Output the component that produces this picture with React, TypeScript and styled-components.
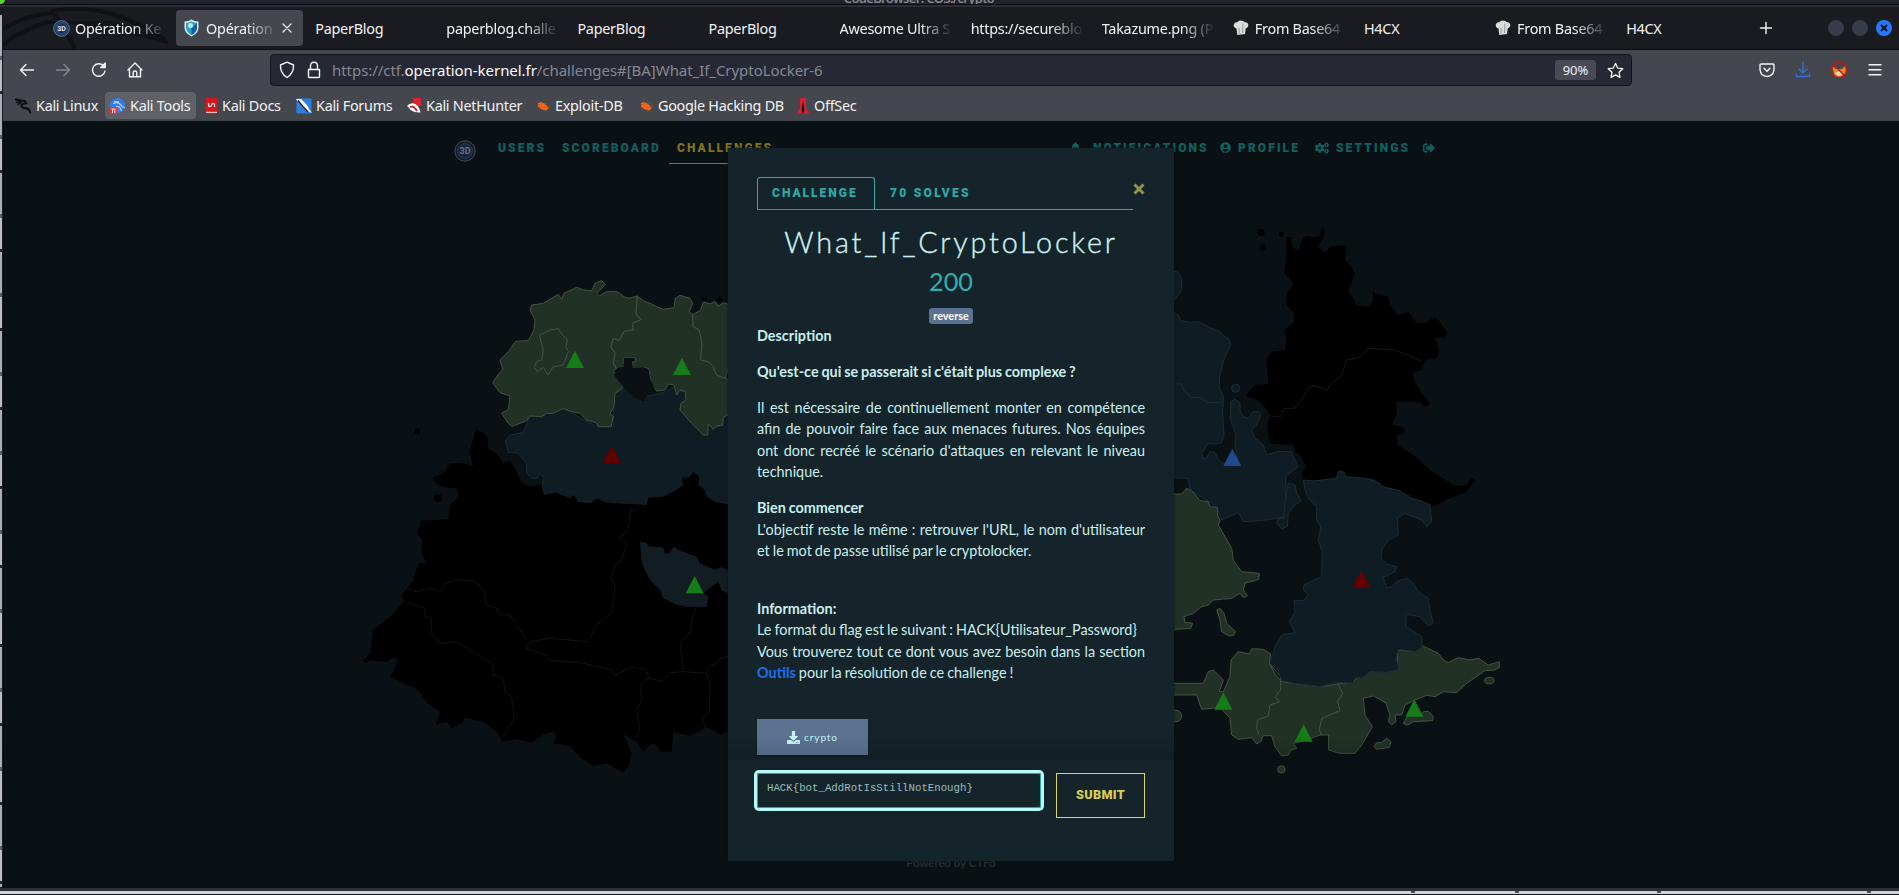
import React from 'react';
import styled, { createGlobalStyle, css } from 'styled-components';
import { FaBell, FaUserCircle, FaCogs, FaSignOutAlt, FaDownload } from 'react-icons/fa';

const GlobalStyle = createGlobalStyle`
  * { box-sizing: border-box; }
  html, body { margin: 0; padding: 0; overflow: hidden; background: #0a1114; }
`;

const Desktop = styled.div`
  position: relative;
  width: 1899px;
  height: 895px;
  display: flex;
  flex-direction: column;
  overflow: hidden;
  background: #1a1b20;
  font-family: 'Noto Sans', sans-serif;
`;
const BackWindow = styled.div`
  height: 7px;
  flex: none;
  overflow: hidden;
  display: flex;
  justify-content: center;
  padding-right: 61px;
  background: linear-gradient(#20212a 0 4px, #0c0d12 4px 5px, #2c2d36 5px 7px);
  color: #85868c;
  font-size: 13px;
  line-height: 18px;
  font-weight: 600;
  white-space: nowrap;
`;
const BackTitle = styled.div`
  height: 4px;
  overflow: hidden;
  span { display: block; margin-top: -11px; letter-spacing: -0.65px; }
`;
const LeftEdge = styled.div`
  position: absolute;
  left: 0;
  top: 15px;
  width: 2px;
  height: 872px;
  background: repeating-linear-gradient(#a9b0b8 0 41px, #59616c 41px 45px, #b9bfc4 45px 76px, #20252e 76px 79px);
`;
const GreenDot = styled.div`
  position: absolute;
  left: -4px;
  top: -5px;
  width: 9px;
  height: 9px;
  border-radius: 50%;
  background: #59d631;
`;
const Browser = styled.div`
  margin-left: 2px;
  display: flex;
  flex-direction: column;
  height: 881px;
  flex: none;
  border-left: 1px solid #15171c;
`;
const TabBar = styled.div`
  position: relative;
  height: 43px;
  flex: none;
  display: flex;
  align-items: center;
  padding-left: 40px;
  background: #1a1b20;
  border-bottom: 1px solid #0e0f14;
`;
const Dragon = styled.svg`
  position: absolute;
  left: 0;
  top: 0;
`;
const Tab = styled.div<{ $active?: boolean }>`
  position: relative;
  width: 127.1px;
  margin: 0 2px;
  height: 36px;
  padding: 0 ${p => (p.$active ? 6 : 8)}px 0 8px;
  border-radius: 4px;
  display: flex;
  align-items: center;
  color: #f3f3f5;
  ${p => p.$active && css`background: #44474d;`}
`;
const TabIcon = styled.span`
  width: 22px;
  flex: none;
  display: flex;
`;
const TabTitle = styled.span<{ $fade?: boolean }>`
  flex: 1;
  overflow: hidden;
  white-space: nowrap;
  font-size: 14.4px;
  letter-spacing: -0.25px;
  ${p => p.$fade && css`mask-image: linear-gradient(90deg, #000 calc(100% - 32px), transparent calc(100% + 2px));`}
`;
const NewTab = styled.div`
  width: 38px;
  display: flex;
  justify-content: center;
`;
const WindowButtons = styled.div`
  margin-left: auto;
  padding-right: 7px;
  display: flex;
  gap: 8px;
`;
const WindowButton = styled.span<{ $close?: boolean }>`
  width: 16px;
  height: 16px;
  border-radius: 50%;
  background: ${p => (p.$close ? '#2777ff' : '#383c4a')};
  display: flex;
  align-items: center;
  justify-content: center;
`;
const Toolbar = styled.div`
  height: 41px;
  flex: none;
  display: flex;
  align-items: center;
  background: #44474d;
  padding: 0 15px 1px 15px;
`;
const NavButtons = styled.div`
  width: 252px;
  display: flex;
  gap: 18px;
  svg { display: block; }
`;
const UrlBar = styled.div`
  width: 1362px;
  height: 32px;
  display: flex;
  align-items: center;
  padding: 0 7px 0 8px;
  border: 1px solid #14151c;
  border-radius: 4px;
  background: #262833;
`;
const UrlIcons = styled.div`
  width: 53px;
  display: flex;
  gap: 11px;
  align-items: center;
`;
const Url = styled.div`
  flex: 1;
  font-size: 15px;
  letter-spacing: -0.05px;
  color: #868891;
  white-space: nowrap;
  b { font-weight: 400; color: #fbfbfe; }
`;
const Zoom = styled.span`
  width: 41px;
  height: 20px;
  border-radius: 3px;
  background: #484a55;
  color: #f3f3f5;
  font-size: 13px;
  line-height: 21px;
  text-align: center;
  margin-right: 11px;
`;
const Tools = styled.div`
  flex: 1;
  display: flex;
  justify-content: flex-end;
  gap: 18px;
`;
const Bookmarks = styled.div`
  height: 30px;
  flex: none;
  display: flex;
  align-items: flex-start;
  padding: 1px 0 0 7px;
  background: #44474d;
`;
const Bookmark = styled.div<{ $w: number; $hover?: boolean }>`
  width: ${p => p.$w}px;
  height: 27px;
  margin-right: 4px;
  display: flex;
  align-items: center;
  gap: 4px;
  padding: 0 0 0 5px;
  border-radius: 4px;
  background: ${p => (p.$hover ? '#5f6166' : 'transparent')};
  color: #f3f3f5;
  font-size: 14.4px;
  letter-spacing: -0.28px;
  white-space: nowrap;
  svg { flex: none; }
`;
const Page = styled.main`
  position: relative;
  flex: 1;
  overflow: hidden;
  background: #0a1115;
  font-family: Lato, sans-serif;
`;
const MapSvg = styled.svg`
  position: absolute;
  left: -3px;
  top: 0;
`;
const Navbar = styled.nav`
  position: relative;
  height: 60px;
  display: flex;
  align-items: flex-start;
  padding: 19px 462px 0 451px;
`;
const NavLogo = styled.div`
  width: 44px;
  flex: none;
`;
const NavItem = styled.div<{ $w: number; $active?: boolean }>`
  width: ${p => p.$w}px;
  height: 24px;
  flex: none;
  display: flex;
  align-items: flex-start;
  gap: 5px;
  font: 900 12px/16px Roboto, sans-serif;
  letter-spacing: 2.1px;
  color: ${p => (p.$active ? '#7f741d' : '#0f615f')};
  white-space: nowrap;
  svg { flex: none; }
  ${p => p.$active && css`padding-left: 8px; margin-left: -8px; border-bottom: 1px solid #7b7a35;`}
`;
const NavRight = styled.div`
  margin-left: auto;
  display: flex;
`;
const NavIcon = styled.span<{ $top?: number; $right?: number }>`
  display: flex;
  margin-top: ${p => p.$top ?? 2}px;
  margin-right: ${p => p.$right ?? 2}px;
`;
const Footer = styled.footer`
  position: absolute;
  left: 0;
  right: 0;
  bottom: 17px;
  text-align: center;
  font-size: 11.5px;
  line-height: 16px;
  color: #303437;
`;
const Shade = styled.div`
  position: absolute;
  left: 0;
  right: 0;
  top: 615px;
  height: 24px;
  background: linear-gradient(transparent, rgba(0, 0, 0, 0.12));
  border-bottom: 1px solid rgba(0, 0, 0, 0.06);
`;
const Modal = styled.section`
  position: absolute;
  left: 725px;
  top: 27px;
  width: 446px;
  height: 713px;
  padding: 29px 29px 0;
  background: #14242a;
  box-shadow: 0 0 2px #081014;
  color: #c9eeee;
`;
const ModalTabs = styled.div`
  width: 376px;
  height: 33px;
  display: flex;
  border-bottom: 1px solid #2fa9ab;
`;
const ModalTab = styled.div<{ $active?: boolean }>`
  height: 33px;
  padding: 0 0 0 14px;
  border: 1px solid ${p => (p.$active ? '#2fa9ab' : 'transparent')};
  border-bottom-color: ${p => (p.$active ? '#2a9b9d' : 'transparent')};
  border-radius: 3px 3px 0 0;
  font: 900 12px/31px Roboto, sans-serif;
  letter-spacing: ${p => (p.$active ? 2 : 2.3)}px;
  color: #28aaac;
  white-space: nowrap;
  width: ${p => (p.$active ? 118 : 120)}px;
`;
const Close = styled.span`
  position: absolute;
  right: 29px;
  top: 35px;
  line-height: 0;
`;
const Title = styled.h2`
  margin: 15px -20px 0;
  text-align: center;
  font: 300 28.8px/34px Lato, sans-serif;
  letter-spacing: 2.8px;
  -webkit-text-stroke: 0.35px #ccf3f3;
  color: #ccf3f3;
`;
const Points = styled.h3`
  margin: 7px 0 0;
  text-align: center;
  font: 400 25.2px/30px Lato, sans-serif;
  color: #2fafb0;
`;
const TagRow = styled.div`
  margin-top: 12px;
  display: flex;
  justify-content: center;
`;
const Tag = styled.span`
  height: 16px;
  padding: 0 4px;
  border-radius: 3px;
  background: #5b7290;
  color: #fff;
  font: 700 10.8px/15px Lato, sans-serif;
`;
const Description = styled.div`
  margin-top: 1px;
  height: 394px;
  font-size: 14.4px;
  line-height: 21.5px;
  word-spacing: -0.65px;
  text-align: justify;
  p { margin: 0 0 14.4px; }
  a { color: #1a6ff0; font-weight: 700; }
`;
const FileButton = styled.div`
  width: 111px;
  height: 36px;
  display: flex;
  align-items: center;
  justify-content: center;
  gap: 4px;
  background: #5b7290;
  color: #c3f4f4;
  font-size: 10.1px;
  letter-spacing: 0.9px;
  box-shadow: 0 1px 2px rgba(0, 0, 0, 0.35);
`;
const SubmitRow = styled.div`
  margin-top: 18px;
  display: flex;
  justify-content: space-between;
  align-items: flex-start;
`;
const Answer = styled.div`
  width: 284px;
  height: 35px;
  padding: 0 9px;
  border: 1px solid #2fa6a6;
  border-radius: 2px;
  box-shadow: 0 0 0 3px #b5fbfa;
  font: 10.72px/29px 'Liberation Mono', monospace;
  color: #98bfc0;
`;
const Submit = styled.div`
  width: 89px;
  height: 45px;
  border: 1px solid #dcd35d;
  color: #d9cf4e;
  text-align: center;
  font: 900 12.6px/42px Roboto, sans-serif;
  letter-spacing: 0.3px;
`;
const BottomEdge = styled.div`
  position: relative;
  height: 7px;
  flex: none;
  background: linear-gradient(#2c2d35 0 3px, #d3d4d9 3px 6px, #14151d 6px);
`;
const EdgeMark = styled.span<{ $x: number }>`
  position: absolute;
  left: ${p => p.$x}px;
  top: 3px;
  width: 4px;
  height: 2px;
  background: #4a4f5a;
`;

const Badge3D = ({ size, dim }: { size: number; dim?: boolean }) => (
  <svg width={size} height={size} viewBox="0 0 22 22">
    <circle cx="11" cy="11" r="10.2" fill={dim ? '#141d2c' : '#1d3a68'} stroke={dim ? '#474e53' : '#6f8f8c'} />
    <circle cx="11" cy="11" r="7.3" fill={dim ? '#16244a' : '#173667'} stroke={dim ? '#39414c' : '#3d6186'} strokeWidth="0.8" />
    <text x="11" y="14.2" textAnchor="middle" fontFamily="Roboto" fontSize="9" fontWeight="700" fill={dim ? '#6c7274' : '#dfe9f1'}>3D</text>
  </svg>
);
const ShieldFavicon = () => (
  <svg width="15" height="18" viewBox="0 0 15 18">
    <path d="M7.500.5Q10.500 2.500 14.500 2.500V9Q14 14.500 7.500 17.500Q1 14.500.5 9V2.500Q4.500 2.500 7.500.5Z" fill="#d9eef7" />
    <path d="M7.500 2.200Q10 3.800 13 3.900V9Q12.500 13.500 7.500 16Q2.500 13.500 2 9V3.900Q5 3.800 7.500 2.200Z" fill="#2f9fce" />
    <path d="M7.500 9L13 4V9Q12.500 13.500 7.500 16Z" fill="#0d5fae" />
    <circle cx="6.500" cy="6.500" r="2.500" fill="#bfeaf5" />
  </svg>
);
const ChefHat = () => (
  <svg width="16" height="16" viewBox="0 0 16 16">
    <path d="M3.500 8.500Q.3 7.500.8 4.500Q1.500 2 4.300 2.200Q6 0 8.500.8Q10.500.2 12 2.300Q15 2.200 15.300 4.800Q15.500 7.500 12.700 8.500L12 14L4.300 15Z" fill="#dcdcdc" />
    <path d="M6 8L6.300 13.500M10 3.500L9.500 13" stroke="#9a9a9a" fill="none" />
  </svg>
);
const line = { fill: 'none', stroke: '#f4f4f6', strokeWidth: 1.4, strokeLinecap: 'round' as const, strokeLinejoin: 'round' as const };

const BookmarkGlyph = ({ kind }: { kind: string }) => {
  switch (kind) {
    case 'kali':
      return (
        <svg width="17" height="16" viewBox="0 0 17 16" fill="none" stroke="#0c0d10" strokeLinecap="round">
          <path d="M.8 1.500L6 2.500L9.500 3L11 5.200L7 6.300Q5.500 8.500 8 9.700L12.500 10.500Q14.500 11.500 15.300 14.500" strokeWidth="2" />
          <path d="M1.500 4.500L6 3M3 6.500L6.500 4" strokeWidth="1.400" />
        </svg>
      );
    case 'tools':
      return (
        <svg width="16" height="16" viewBox="0 0 16 16">
          <circle cx="7.500" cy="7.500" r="7.500" fill="#2f7df0" />
          <path d="M3 5.500Q8 3.500 10.500 6.500Q12 9 15 10M6 8.500Q10 7.500 11.500 13M4 3.500L9 3.800" stroke="#b9d5fa" strokeWidth="1.200" fill="none" />
          <rect y="9" width="7" height="7" fill="#e3333b" />
          <path d="M2.500 11V15M4.800 11V15M1.500 11H5.500" stroke="#fff" strokeWidth=".8" />
        </svg>
      );
    case 'docs':
      return (
        <svg width="13" height="16" viewBox="0 0 13 16">
          <rect x=".5" width="12" height="16" rx="1" fill="#d8141c" />
          <path d="M1 14.300H12" stroke="#f6dada" />
          <path d="M3.500 5V7.500Q3.500 8.500 5 8.500Q6.500 8.500 6.500 7Q6.500 5.500 8 5.500Q9.500 5.500 9.500 6.500V9" stroke="#fff" strokeWidth="1.200" fill="none" />
        </svg>
      );
    case 'forums':
      return (
        <svg width="16" height="16" viewBox="0 0 16 16">
          <rect x=".5" y=".5" width="15" height="15" rx="1" fill="#2b7fe0" />
          <path d="M0 1L5 1L11 7L13 11L16 15L10 12.500L6 8Z" fill="#fff" />
          <path d="M2 2.500L7 8.500L12 14" stroke="#12161d" strokeWidth="1.300" fill="none" />
        </svg>
      );
    case 'nethunter':
      return (
        <svg width="16" height="16" viewBox="0 0 16 16">
          <path d="M6 0H15Q14 3 15.500 7L10 10Z" fill="#dd2230" />
          <path d="M1 8Q5 3.500 10 6.500Q14 10 14.500 14.500Q9 15 4.500 12Q3 9.500 1 8Z" fill="#fff" />
          <path d="M4 9Q8 7.500 11 13" stroke="#c61b2a" strokeWidth="1.800" fill="none" />
        </svg>
      );
    case 'offsec':
      return (
        <svg width="14" height="16" viewBox="0 0 14 16">
          <path d="M4 0H10V10L13.500 15.500H.5L4 10Z" fill="#d5202f" />
          <path d="M7 3L8.500 12L7 15.500L5.500 12Z" fill="#2a0a0d" />
        </svg>
      );
    default:
      return (
        <svg width="16" height="16" viewBox="0 0 16 16">
          <path d="M3 5L6 4L10.500 6L14 10.500L11 12.500L6.500 11.500L3 8.500Z" fill="#e8671b" />
          <path d="M2 6L5 7M4 12L6 10M12 5L10 7M15 8L12 9M9 14V11" stroke="#b54c10" strokeWidth=".7" />
        </svg>
      );
  }
};

const GREEN = { fill: '#213125', stroke: '#44523f', strokeWidth: 3 };
const BLUE = { fill: '#101c23', stroke: '#1a2c37', strokeWidth: 3 };
const markerColor = { g: '#157c17', r: '#650000', b: '#214a8c' };

const Marker = ({ x, y, c }: { x: number; y: number; c: 'g' | 'r' | 'b' }) => (
  <path d={`M${x} ${y}L${x + 27} ${y + 52}H${x - 27}Z`} fill={markerColor[c]} />
);

const IslandMap = () => (
  <MapSvg width="1899" height="767" viewBox="0 121 1899 767" strokeLinejoin="round">
    <g transform="translate(350 130) scale(.33333)">
      <path {...BLUE} d="M540 858L520 908L480 915L466 932L475 967L505 970L518 985L530 1000L530 1030L545 1045L560 1045L570 1032L583 1045L575 1070L590 1100L900 1140H1134V850L1060 915L990 835L1007 790L975 770L945 785L915 795L890 797L875 815L822 778L790 790V890L740 890L640 835Z" />
      <path {...GREEN} d="M540 540L545 525L580 520L600 508L625 493L635 508L642 490L660 482L680 472L700 480L725 482L735 460L755 452L766 464L740 490L748 498L772 484L802 485L822 500L835 505L862 498L858 550L872 570L848 580L850 600L822 604L808 632L790 625L783 650L795 670L790 700L800 715L790 722L795 735L822 770L795 790L792 830L780 850L790 858L783 890L745 890L738 878L710 870L690 850L665 845L640 835L610 850L590 850L575 860L540 858L530 872L510 880L486 889L475 880L455 850L475 838L480 798L450 788L428 758L440 740L458 718L450 690L475 665L497 634L535 632L552 600L555 570Z" />
      <path {...GREEN} d="M568 615L600 600L625 596L640 618L652 628L648 650L655 665L640 705L610 710L594 735L580 712L562 725L553 712L560 695L575 690L580 660Z" />
      <path {...GREEN} d="M862 498L880 512L900 520L920 530L940 538L972 533L976 505L990 496L1020 505L1028 520L1018 545L1028 555L1030 590L1048 600L1056 640L1052 690L1075 695L1090 710L1100 735L1130 745L1140 760V850L1120 862L1118 885L1100 888L1090 898L1075 882L1073 915L1060 915L1025 880L990 840L993 820L1007 810V785L990 780L980 795L972 765L955 762L945 780L920 783L905 765L895 715L880 712L860 722L845 710L848 695L858 695L855 684H822L820 710L800 715L790 700L795 670L783 650L790 625L808 632L822 604L850 600L848 580L872 570L858 550Z" />
      <path {...GREEN} d="M1140 525L1120 518L1105 528L1095 515L1080 522L1060 516L1052 540L1028 555L1030 590L1048 600L1056 640L1052 690L1075 695L1090 710L1100 735L1125 745L1140 700Z" />
      <path fill="#0a1115" d="M802 713L820 710L822 684H855L845 700L850 715L880 712L895 718L900 745L917 783L890 797L880 815L850 802L822 775L792 735Z" />
      <path d="M1056 504L1070 502V512H1056ZM1098 510L1108 500L1122 510L1110 516Z" />
      <path d="M378 898L400 908L415 925L412 955L440 970L460 1000L480 993L495 1015L515 1060L545 1070L575 1062L580 1095L620 1088L635 1095L660 1105L670 1095L685 1115L720 1120L740 1105L770 1118L890 1125L895 1103L940 1100L970 1085L1000 1065L995 1045L1020 1040L1030 1025L1048 1042L1045 1065L1065 1080L1070 1100L1095 1115L1140 1125V1800L1115 1815L1085 1800L1065 1790L1055 1800L1020 1818L970 1805L965 1865L930 1865L920 1845L905 1840L880 1865L860 1835L820 1813L845 1870L838 1905L820 1928L770 1900L730 1908L690 1880L660 1848L610 1840L620 1818L610 1805L580 1812L545 1838L500 1828L458 1835L440 1805L400 1775L345 1763L335 1780L305 1795L290 1775L258 1785L270 1745L235 1722L205 1680L122 1640L145 1590L130 1582L110 1595L60 1590L50 1600L38 1592L60 1570L70 1500L120 1460L165 1410L152 1400L190 1350L205 1300L228 1300L215 1270L217 1230L200 1210L215 1172L295 1168L300 1125L325 1100L320 1075L285 1072L255 1060L250 1045L285 1025L300 1000L330 998L370 1008L358 970Z" />
      <circle cx="202" cy="904" r="9" /><circle cx="264" cy="1105" r="12" />
      <path fill="#111d23" d="M870 1235L890 1238L895 1248L940 1253L945 1272L960 1268L970 1250L1000 1265L1040 1280L1050 1300L1095 1320L1115 1310L1140 1325V1395L1115 1380L1105 1355L1060 1390L1075 1400L1070 1432L1040 1430L1010 1430L980 1425L940 1405L930 1380L900 1350L875 1300Z" />
      <g fill="none" stroke="#131313" strokeWidth="3">
        <path d="M860 1138L842 1145L835 1195L810 1225L830 1245L815 1290L795 1305L783 1340L795 1370L785 1450L740 1485L713 1535L600 1525L540 1535L528 1555L590 1575L600 1590L700 1600L785 1620L795 1637L845 1610L890 1620L895 1642L935 1655L960 1628L1000 1625L1070 1630L1075 1610L1100 1600L1110 1585L1134 1580" />
        <path d="M175 1375L195 1385L245 1375L275 1387L285 1360L320 1350L375 1352L400 1380L410 1428L440 1435L450 1455L480 1455L530 1530M170 1415L225 1435V1460L245 1465V1510L270 1542L320 1535L350 1555L425 1600L430 1635L460 1645L465 1685L485 1700L492 1765L460 1820" />
        <path d="M1040 1430L1025 1470L1022 1505L990 1540L1000 1625M895 1642L870 1670L876 1710L860 1740L870 1800L858 1825M1070 1630L1080 1660L1078 1750L1055 1765L1065 1790" />
      </g>
      <Marker x={675} y={662} c="g" /><Marker x={996} y={683} c="g" /><Marker x={785} y={948} c="r" /><Marker x={1034} y={1338} c="g" />
    </g>
    <g transform="translate(1160 130) scale(.33333)">
      <path {...BLUE} d="M20 425H50Q65 430 65 460L63 485L42 512H20Z" />
      <path {...BLUE} d="M20 540L42 548L55 555L62 572L90 577L115 575L150 593L180 605L190 618L205 625L212 645L203 665L192 690L178 740L178 775L190 800L188 850L192 915L185 938L165 942L145 940L125 970L130 988L142 980L150 965L165 968L175 990L190 1000L235 1000L225 940L228 915L212 870L212 815L225 808L240 820L240 840L250 860L265 865L280 845L295 845L302 855L290 885L275 900L285 925L310 945L320 975L350 965L395 965L400 980L415 1010L378 1038L375 1160L330 1168L300 1172L250 1175L235 1148L185 1170L170 1130L90 1080L85 1045L20 1042Z" />
      <path {...BLUE} fill="none" d="M20 762H65L70 780L95 802L120 803L145 818H188" />
      <path {...BLUE} d="M385 1060L405 1065L410 1090L424 1112L405 1125L385 1150L382 1190L365 1196L350 1180L355 1165L370 1165L375 1115Z" />
      <circle cx="227" cy="775" r="12" {...BLUE} />
      <path d="M378 322L392 320L398 355L415 358L430 320L445 318L460 322L478 318L488 292L497 305L475 350L495 368L510 350L560 346L555 390L575 410L585 435L575 455L565 485L585 510L587 525L625 530L640 510L638 485L660 495L685 500L690 525L712 555L745 546L770 580L795 578L825 562L840 575L862 610L855 622L825 625L838 660L830 685L795 690L785 720L757 730L765 755L785 790L810 820L800 832L775 815H710V850L697 885L730 890L735 908L710 915L712 945L760 975L810 1020L880 1065L915 1068L935 1045L945 1050L920 1085L870 1105L830 1125L805 1133L770 1110L750 1095L665 1065L640 1045L560 1040L540 1018L525 1048L430 1052L425 1030L440 1010L420 975L405 965L400 945L330 940L322 890L330 855L310 825L290 808L258 797L285 765L325 762L320 690L335 665L375 660L380 630L372 600L405 575L400 545L378 525L380 490L400 465L388 445L372 430L380 375Z" />
      <circle cx="303" cy="307" r="11" /><circle cx="310" cy="353" r="9" /><circle cx="364" cy="313" r="8" />
      <path fill="none" stroke="#171717" strokeWidth="3" d="M330 858L362 860L372 835L405 835L430 800L450 768L470 768L500 782L510 765L545 735L560 690L600 682L625 655L700 660L745 675L785 695" />
      <g transform="translate(0 1020)">
        <path {...GREEN} d="M20 640H130L145 605L160 600L190 630L178 665H190L210 620L213 570L235 545L268 552L275 536L310 538L332 552L328 580L345 612L365 635L400 640L480 650L580 635L600 615L630 605L712 600L712 540L760 545L787 527L835 550L850 570L865 578L895 563L930 570L955 565L985 585L1018 575V592L1005 600L975 602L920 640L890 668L850 665L825 680L800 676L765 690L735 705L725 735H705L708 755L695 764L685 755L690 735L678 700L660 688L640 678L610 685L615 735L637 770L605 825L585 850H540L506 840V795L480 795L440 810L400 820L410 835L392 840L385 855L365 858L345 830L335 797H310L302 815L290 822L275 803L235 808L215 795L210 745L180 712L125 718L110 675H20Z" />
        <path {...GREEN} fill="none" d="M328 580L362 620V660L345 680L358 695L330 705L325 738L292 750L290 775L298 797M533 640L548 670L533 695L540 722L485 745L478 780L485 795" />
        <path {...BLUE} d="M430 30L460 33L530 25L535 5H550L560 20L630 28L660 40L665 50L720 62L750 85L785 92L810 105L815 155L800 170L785 150L735 130L712 145L715 195L685 210L665 240L663 265L680 282L710 290L705 305L670 322L680 355L695 350L710 335L740 325L760 340L775 365L805 385L810 420L820 460L805 468L780 440L738 433V470L785 500L787 530L765 545L715 538L708 565L716 600L680 607L630 605L605 625L583 620L580 638L530 637L480 650L400 640L365 630L355 600L330 580L345 530L365 495L405 488L388 455L405 425L402 392L430 392L445 375L430 360L432 345L485 320L487 245L475 210L482 170L470 150V110L445 85L435 60Z" />
        <path {...GREEN} d="M20 72H65L80 55L95 62L120 92L145 95L150 110L172 112V135L180 150L175 165L195 200L215 235L220 272L245 305L298 310L296 328L255 340L250 360L262 378L250 382L240 370L215 385L160 390L145 405L125 410L100 430L72 440L75 457L98 460L92 475L20 480Z" />
        <path {...GREEN} d="M170 420L180 415L192 430L200 460L227 485L220 496L207 498L185 485L180 450Z" />
        <path {...GREEN} d="M730 760L745 735H780L790 725L805 724L820 740L818 752L760 755L742 766Z" />
        <path {...GREEN} d="M642 830L650 818L665 818L680 805L692 815L688 832L650 838Z" />
        <circle cx="364" cy="898" r="11" {...GREEN} /><ellipse cx="988" cy="632" rx="14" ry="10" {...GREEN} /><circle cx="48" cy="738" r="17" {...GREEN} />
        <Marker x={604} y={301} c="r" /><Marker x={190} y={667} c="g" /><Marker x={431} y={763} c="g" /><Marker x={763} y={688} c="g" />
      </g>
      <Marker x={217} y={956} c="b" />
    </g>
  </MapSvg>
);

type TabInfo = { title: string; icon?: React.ReactNode; fade?: boolean; active?: boolean };
const tabs: TabInfo[] = [
  { title: 'Opération Ke', icon: <Badge3D size={17} />, fade: true },
  { title: 'Opération K', icon: <ShieldFavicon />, fade: true, active: true },
  { title: 'PaperBlog' },
  { title: 'paperblog.challe', fade: true },
  { title: 'PaperBlog' },
  { title: 'PaperBlog' },
  { title: 'Awesome Ultra S', fade: true },
  { title: 'https://secureblo', fade: true },
  { title: 'Takazume.png (P', fade: true },
  { title: 'From Base64', icon: <ChefHat />, fade: true },
  { title: 'H4CX' },
  { title: 'From Base64', icon: <ChefHat />, fade: true },
  { title: 'H4CX' },
];
const bookmarks = [
  { label: 'Kali Linux', kind: 'kali', w: 91 },
  { label: 'Kali Tools', kind: 'tools', w: 91, hover: true },
  { label: 'Kali Docs', kind: 'docs', w: 87 },
  { label: 'Kali Forums', kind: 'forums', w: 106 },
  { label: 'Kali NetHunter', kind: 'nethunter', w: 125 },
  { label: 'Exploit-DB', kind: 'bug', w: 99 },
  { label: 'Google Hacking DB', kind: 'bug', w: 154 },
  { label: 'OffSec', kind: 'offsec', w: 80 },
];

export default function App() {
  return (
    <Desktop>
      <GlobalStyle />
      <BackWindow><BackTitle><span>CodeBrowser: COS:/crypto</span></BackTitle></BackWindow>
      <Browser>
        <TabBar>
          <Dragon width="170" height="42" viewBox="0 0 170 42" fill="none" stroke="#101116">
            <path d="M0 22Q22 8 50 6L60 18L72 42M0 38Q25 18 52 14M48 4Q80 -2 112 8Q135 16 152 26Q160 30 162 34Q130 24 108 22" strokeWidth="4" />
            <path d="M60 14Q95 26 160 32L130 20L108 14Z" fill="#131419" stroke="none" />
          </Dragon>
          {tabs.map((t, i) => (
            <Tab key={i} $active={t.active}>
              {t.icon && <TabIcon>{t.icon}</TabIcon>}
              <TabTitle $fade={t.fade}>{t.title}</TabTitle>
              {t.active && (
                <svg width="20" height="20" viewBox="0 0 20 20" {...line} strokeWidth={1.2}><path d="M6 6L14 14M14 6L6 14" /></svg>
              )}
            </Tab>
          ))}
          <NewTab><svg width="14" height="14" viewBox="0 0 14 14" {...line}><path d="M7 1.500V12.500M1.500 7H12.500" /></svg></NewTab>
          <WindowButtons>
            <WindowButton /><WindowButton />
            <WindowButton $close><svg width="8" height="8" viewBox="0 0 8 8" stroke="#0c1220" strokeWidth="2"><path d="M1 1L7 7M7 1L1 7" /></svg></WindowButton>
          </WindowButtons>
        </TabBar>
        <Toolbar>
          <NavButtons>
            <svg width="18" height="18" viewBox="0 0 18 18" {...line}><path d="M15.500 9H2.500M8 3.500L2.500 9L8 14.500" /></svg>
            <svg width="18" height="18" viewBox="0 0 18 18" {...line} stroke="#85878c"><path d="M2.500 9H15.500M10 3.500L15.500 9L10 14.500" /></svg>
            <svg width="18" height="18" viewBox="0 0 18 18" {...line}><path d="M15 10A6.300 6.300 0 1 1 13.500 4.800" /><path d="M15.300 2V6.500H10.800Z" fill="#f4f4f6" /></svg>
            <svg width="18" height="18" viewBox="0 0 18 18" {...line}><path d="M2 9L9 2L16 9M3.500 8V15.700H14.500V8M7.200 15.500V11.500Q7.200 10 9 10Q10.800 10 10.800 11.500V15.500" /></svg>
          </NavButtons>
          <UrlBar>
            <UrlIcons>
              <svg width="16" height="18" viewBox="0 0 16 18" {...line}><path d="M8 1.200L14.500 4Q15 12 8 16.500Q1 12 1.500 4Z" /></svg>
              <svg width="16" height="18" viewBox="0 0 16 18" {...line}><path d="M2.500 8.500H13.500V15.500Q13.500 16.500 12.500 16.500H3.500Q2.500 16.500 2.500 15.500ZM4.500 8V5Q4.500 1.200 8 1.200Q11.500 1.200 11.500 5V8" /></svg>
            </UrlIcons>
            <Url>https://ctf.<b>operation-kernel.fr</b>/challenges#[BA]What_If_CryptoLocker-6</Url>
            <Zoom>90%</Zoom>
            <svg width="17" height="17" viewBox="0 0 18 18" {...line}><path d="M9 1.500L11.300 6.400L16.700 7.100L12.700 10.800L13.700 16.200L9 13.600L4.300 16.200L5.300 10.800L1.300 7.100L6.700 6.400Z" /></svg>
          </UrlBar>
          <Tools>
            <svg width="18" height="18" viewBox="0 0 18 18" {...line}><path d="M3 3H15Q16 3 16 4V8.500Q15.500 15 9 15.500Q2.500 15 2 8.500V4Q2 3 3 3ZM6 7.200L9 10.200L12 7.200" /></svg>
            <svg width="18" height="18" viewBox="0 0 18 18" {...line} stroke="#2e6fd8"><path d="M9 1V11.500M5 8L9 12L13 8M2.500 13V15.500H15.500V13" /></svg>
            <svg width="18" height="18" viewBox="0 0 18 18"><path d="M2 5L6 8H12L16 4V11L13 16H5Z" fill="#e8862a" /><path d="M5 12L8 15H11L13 12L9 10Z" fill="#f1d9b0" /><circle cx="9" cy="9" r="7.600" fill="none" stroke="#b51f16" strokeWidth="1.500" /><path d="M4 4L14 14" stroke="#b51f16" strokeWidth="1.500" /></svg>
            <svg width="18" height="18" viewBox="0 0 18 18" {...line}><path d="M3 3.700H15M3 8.700H15M3 13.700H15" /></svg>
          </Tools>
        </Toolbar>
        <Bookmarks>
          {bookmarks.map(b => (
            <Bookmark key={b.label} $w={b.w} $hover={b.hover}><BookmarkGlyph kind={b.kind} />{b.label}</Bookmark>
          ))}
        </Bookmarks>
        <Page>
          <IslandMap />
          <Navbar>
            <NavLogo><Badge3D size={22} dim /></NavLogo>
            <NavItem $w={64}>USERS</NavItem>
            <NavItem $w={115}>SCOREBOARD</NavItem>
            <NavItem $w={120} $active>CHALLENGES</NavItem>
            <NavRight>
              <NavItem $w={150}><NavIcon $right={7}><FaBell size={11} /></NavIcon>NOTIFICATIONS</NavItem>
              <NavItem $w={95}><NavIcon><FaUserCircle size={11} /></NavIcon>PROFILE</NavItem>
              <NavItem $w={108}><NavIcon $top={1}><FaCogs size={14} /></NavIcon>SETTINGS</NavItem>
              <NavItem $w={14}><NavIcon><FaSignOutAlt size={12} /></NavIcon></NavItem>
            </NavRight>
          </Navbar>
          <Footer>Powered by CTFd</Footer>
          <Modal>
            <Close><svg width="12" height="12" viewBox="0 0 12 12" stroke="#96914c" strokeWidth="3"><path d="M1.500 1.500L10.500 10.500M10.500 1.500L1.500 10.500" /></svg></Close>
            <ModalTabs><ModalTab $active>CHALLENGE</ModalTab><ModalTab>70 SOLVES</ModalTab></ModalTabs>
            <Title>What_If_CryptoLocker</Title>
            <Points>200</Points>
            <TagRow><Tag>reverse</Tag></TagRow>
            <Description>
              <p><b>Description</b></p>
              <p><b>Qu'est-ce qui se passerait si c'était plus complexe ?</b></p>
              <p>Il est nécessaire de continuellement monter en compétence afin de pouvoir faire face aux menaces futures. Nos équipes ont donc recréé le scénario d'attaques en relevant le niveau technique.</p>
              <p><b>Bien commencer</b><br />L'objectif reste le même : retrouver l'URL, le nom d'utilisateur et le mot de passe utilisé par le cryptolocker.<br /><br /></p>
              <p><b>Information:</b><br />Le format du flag est le suivant : HACK{'{'}Utilisateur_Password{'}'}<br />Vous trouverez tout ce dont vous avez besoin dans la section <a>Outils</a> pour la résolution de ce challenge !</p>
            </Description>
            <FileButton><FaDownload size={13} />crypto</FileButton>
            <SubmitRow><Answer>HACK{'{'}bot_AddRotIsStillNotEnough{'}'}</Answer><Submit>SUBMIT</Submit></SubmitRow>
          </Modal>
          <Shade />
        </Page>
      </Browser>
      <BottomEdge>
        <EdgeMark $x={1411} /><EdgeMark $x={1515} /><EdgeMark $x={1657} /><EdgeMark $x={1867} />
      </BottomEdge>
      <LeftEdge />
      <GreenDot />
    </Desktop>
  );
}
